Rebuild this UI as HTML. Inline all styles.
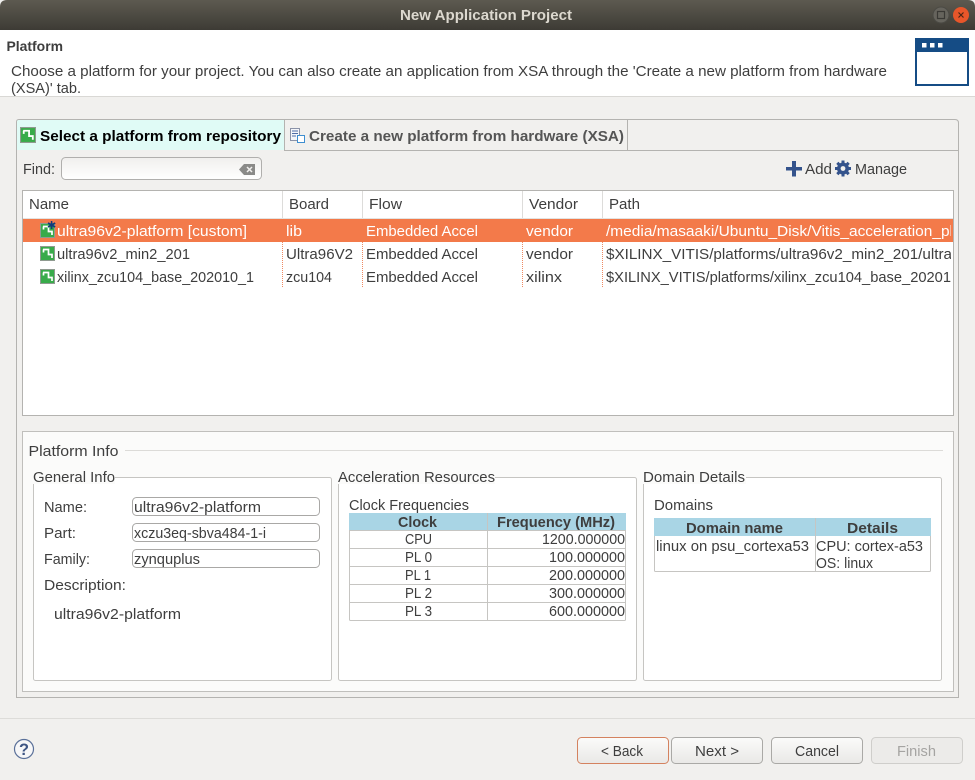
<!DOCTYPE html>
<html><head><meta charset="utf-8"><title>New Application Project</title>
<style>
html,body{margin:0;padding:0;background:#f1f0ee;overflow:hidden}
svg{display:block}
text{font-family:"Liberation Sans",sans-serif;font-size:14.7px;fill:#3e3e3e}
.b{font-weight:bold}
.w{fill:#fff}
</style></head><body>
<svg width="975" height="780" viewBox="0 0 975 780" xmlns="http://www.w3.org/2000/svg">
<defs>
<linearGradient id="tb" x1="0" y1="0" x2="0" y2="1"><stop offset="0" stop-color="#5d5a50"/><stop offset="1" stop-color="#3d3b35"/></linearGradient>
<linearGradient id="btn" x1="0" y1="0" x2="0" y2="1"><stop offset="0" stop-color="#fbfbfa"/><stop offset="1" stop-color="#e9e8e6"/></linearGradient>
<linearGradient id="inp" x1="0" y1="0" x2="0" y2="1"><stop offset="0" stop-color="#f0efed"/><stop offset="1" stop-color="#fff"/></linearGradient>
<clipPath id="pc"><rect x="603" y="219" width="348" height="70"/></clipPath>
<symbol id="pf" viewBox="0 0 15 15"><rect x=".5" y=".5" width="14" height="14" fill="#38ab4a" stroke="#8f9a90"/><path d="M3 3.500H8.500V8.500H12V12M3.500 3.500V6.500" fill="none" stroke="#fff" stroke-width="1.700"/></symbol>
</defs>

<!-- title bar -->
<path d="M0 30V7Q0 0 7 0H968Q975 0 975 7V30Z" fill="url(#tb)"/>
<text class="b" x="400" y="20" textLength="172" lengthAdjust="spacingAndGlyphs" style="fill:#dcd8cf;font-size:15px">New Application Project</text>
<circle cx="941" cy="15" r="8" fill="#66645d" stroke="#4b4a44"/>
<rect x="937.500" y="11.500" width="7" height="7" fill="none" stroke="#3a3935" stroke-width="1.200"/>
<circle cx="961" cy="15" r="8" fill="#e8562a"/>
<path d="M958.500 12.500L963.500 17.500M963.500 12.500L958.500 17.500" stroke="#4a2515" stroke-width="1.200"/>

<!-- header -->
<rect x="0" y="30" width="975" height="66" fill="#fff"/>
<rect x="0" y="96" width="975" height="1" fill="#d9d8d5"/>
<text class="b" x="6.500" y="51" textLength="56.500" lengthAdjust="spacingAndGlyphs" style="font-size:13.800px">Platform</text>
<text x="11" y="76" textLength="876" lengthAdjust="spacingAndGlyphs">Choose a platform for your project. You can also create an application from XSA through the 'Create a new platform from hardware</text>
<text x="11" y="93" textLength="70" lengthAdjust="spacingAndGlyphs">(XSA)' tab.</text>
<rect x="915" y="38" width="54" height="48" fill="#154c85"/>
<rect x="917" y="52" width="50" height="32" fill="#fff"/>
<rect x="922" y="43" width="4.500" height="4.500" fill="#fff"/><rect x="930" y="43" width="4.500" height="4.500" fill="#fff"/><rect x="938" y="43" width="4.500" height="4.500" fill="#fff"/>

<!-- tab folder -->
<path fill="none" stroke="#b4b3b0" d="M16.500 697.500V122Q16.500 119.500 19 119.500H955Q958.500 119.500 958.500 123V697.500Z"/>
<path d="M17 150V122Q17 120 19 120H284V150Z" fill="#e0fbf6"/>
<path fill="none" stroke="#b4b3b0" d="M284.500 120V150.500H958M627.500 120V150.500"/>
<use href="#pf" x="20" y="127" width="16" height="16"/>
<text class="b" x="40" y="141" textLength="241" lengthAdjust="spacingAndGlyphs" style="fill:#000;font-size:15px">Select a platform from repository</text>
<rect x="290.500" y="128.500" width="9" height="12" fill="#f4f6fa" stroke="#8b93a8"/>
<path d="M292 131h6M292 133.500h6M292 136h4" stroke="#4f6ea8"/>
<rect x="297.500" y="135.500" width="7" height="7" fill="#fff" stroke="#3e8ed0"/>
<text class="b" x="309" y="141" textLength="315" lengthAdjust="spacingAndGlyphs" style="fill:#555;font-size:15px">Create a new platform from hardware (XSA)</text>

<!-- find row -->
<text x="23" y="174" textLength="32" lengthAdjust="spacingAndGlyphs">Find:</text>
<rect x="61.500" y="157.500" width="200" height="22" rx="4" fill="url(#inp)" stroke="#b0afad"/>
<path d="M239 169.500L244 164H255V175H244Z" fill="#8a8a88"/>
<path d="M247 167L252 172M252 167L247 172" stroke="#f1f0ee" stroke-width="1.500"/>
<path d="M792 161h4v6h6v3.500h-6v6h-4v-6h-6v-3.500h6z" fill="#34538c"/>
<text x="805" y="174" textLength="27" lengthAdjust="spacingAndGlyphs">Add</text>
<circle cx="843" cy="168.500" r="6" fill="#34538c"/>
<path d="M843 160.500v16M835 168.500h16M837.300 162.800l11.400 11.400M848.700 162.800l-11.400 11.400" stroke="#34538c" stroke-width="3"/>
<circle cx="843" cy="168.500" r="2.400" fill="#f1f0ee"/>
<text x="855" y="174" textLength="52" lengthAdjust="spacingAndGlyphs">Manage</text>

<!-- table -->
<rect x="22.500" y="190.500" width="931" height="225" fill="#fff" stroke="#b4b3b0"/>
<path d="M282.500 191V219M362.500 191V219M522.500 191V219M602.500 191V219" stroke="#dddcda"/>
<rect x="23" y="218" width="930" height="1" fill="#e4e3e1"/>
<text x="29" y="209" textLength="40" lengthAdjust="spacingAndGlyphs">Name</text>
<text x="289" y="209" textLength="40" lengthAdjust="spacingAndGlyphs">Board</text>
<text x="369" y="209" textLength="33" lengthAdjust="spacingAndGlyphs">Flow</text>
<text x="529" y="209" textLength="49" lengthAdjust="spacingAndGlyphs">Vendor</text>
<text x="609" y="209" textLength="31" lengthAdjust="spacingAndGlyphs">Path</text>
<rect x="23" y="219" width="930" height="23" fill="#f37a4a"/>
<path d="M282.500 242V288M362.500 242V288M522.500 242V288M602.500 242V288" stroke="#ee8a63" stroke-dasharray="1 1"/>
<use href="#pf" x="40" y="223" width="15" height="15"/>
<path d="M51.600 221v8M48 223l7.200 4M55.200 223l-7.200 4" stroke="#143b7a" stroke-width="1.600"/>
<use href="#pf" x="40" y="246" width="15" height="15"/>
<use href="#pf" x="40" y="269" width="15" height="15"/>
<text class="w" x="57" y="236" textLength="190" lengthAdjust="spacingAndGlyphs">ultra96v2-platform [custom]</text>
<text class="w" x="286" y="236" textLength="16" lengthAdjust="spacingAndGlyphs">lib</text>
<text class="w" x="366" y="236" textLength="112" lengthAdjust="spacingAndGlyphs">Embedded Accel</text>
<text class="w" x="526" y="236" textLength="47" lengthAdjust="spacingAndGlyphs">vendor</text>
<g clip-path="url(#pc)">
<text class="w" x="606" y="236" textLength="347" lengthAdjust="spacingAndGlyphs">/media/masaaki/Ubuntu_Disk/Vitis_acceleration_pl</text>
<text x="606" y="259" textLength="346" lengthAdjust="spacingAndGlyphs">$XILINX_VITIS/platforms/ultra96v2_min2_201/ultra</text>
<text x="606" y="282" textLength="345" lengthAdjust="spacingAndGlyphs">$XILINX_VITIS/platforms/xilinx_zcu104_base_20201</text>
</g>
<text x="57" y="259" textLength="133" lengthAdjust="spacingAndGlyphs">ultra96v2_min2_201</text>
<text x="286" y="259" textLength="67" lengthAdjust="spacingAndGlyphs">Ultra96V2</text>
<text x="366" y="259" textLength="112" lengthAdjust="spacingAndGlyphs">Embedded Accel</text>
<text x="526" y="259" textLength="47" lengthAdjust="spacingAndGlyphs">vendor</text>
<text x="57" y="282" textLength="197" lengthAdjust="spacingAndGlyphs">xilinx_zcu104_base_202010_1</text>
<text x="286" y="282" textLength="46" lengthAdjust="spacingAndGlyphs">zcu104</text>
<text x="366" y="282" textLength="112" lengthAdjust="spacingAndGlyphs">Embedded Accel</text>
<text x="526" y="282" textLength="36" lengthAdjust="spacingAndGlyphs">xilinx</text>

<!-- platform info -->
<rect x="22.500" y="431.500" width="931" height="260" fill="#fbfbfa" stroke="#c0bfbc"/>
<text x="28.500" y="456" textLength="90" lengthAdjust="spacingAndGlyphs">Platform Info</text>
<rect x="125" y="450" width="818" height="1" fill="#dcdbd8"/>

<!-- general -->
<rect x="33.500" y="477.500" width="298" height="203" rx="2" fill="#fff" stroke="#c6c5c2"/>
<rect x="32" y="470" width="83" height="14" fill="#fbfbfa"/>
<text x="33" y="482" textLength="82" lengthAdjust="spacingAndGlyphs">General Info</text>
<text x="44" y="512" textLength="43" lengthAdjust="spacingAndGlyphs">Name:</text>
<text x="44" y="538" textLength="32" lengthAdjust="spacingAndGlyphs">Part:</text>
<text x="44" y="564" textLength="46" lengthAdjust="spacingAndGlyphs">Family:</text>
<text x="44" y="590" textLength="82" lengthAdjust="spacingAndGlyphs">Description:</text>
<text x="54" y="619" textLength="127" lengthAdjust="spacingAndGlyphs">ultra96v2-platform</text>
<rect x="132.500" y="497.500" width="187" height="18" rx="4" fill="#fff" stroke="#a9a8a6"/>
<rect x="132.500" y="523.500" width="187" height="18" rx="4" fill="#fff" stroke="#a9a8a6"/>
<rect x="132.500" y="549.500" width="187" height="18" rx="4" fill="#fff" stroke="#a9a8a6"/>
<text x="134" y="512" textLength="127" lengthAdjust="spacingAndGlyphs">ultra96v2-platform</text>
<text x="134" y="538" textLength="132" lengthAdjust="spacingAndGlyphs">xczu3eq-sbva484-1-i</text>
<text x="134" y="564" textLength="66" lengthAdjust="spacingAndGlyphs">zynquplus</text>

<!-- acceleration -->
<rect x="338.500" y="477.500" width="298" height="203" rx="2" fill="#fff" stroke="#c6c5c2"/>
<rect x="337" y="470" width="158" height="14" fill="#fbfbfa"/>
<text x="338" y="482" textLength="157" lengthAdjust="spacingAndGlyphs">Acceleration Resources</text>
<text x="349" y="510" textLength="120" lengthAdjust="spacingAndGlyphs">Clock Frequencies</text>
<rect x="349.500" y="513.500" width="276" height="107" rx="1" fill="#fff" stroke="#c6c5c2"/>
<rect x="349" y="513" width="277" height="17" fill="#a9d5e5"/>
<path d="M487.500 513V621" stroke="#c6c5c2"/>
<path d="M349 530.500H626M349 548.500H626M349 566.500H626M349 584.500H626M349 602.500H626" stroke="#c6c5c2"/>
<text class="b" x="398" y="527" textLength="39" lengthAdjust="spacingAndGlyphs">Clock</text>
<text class="b" x="497" y="527" textLength="118" lengthAdjust="spacingAndGlyphs">Frequency (MHz)</text>
<text x="405" y="544" textLength="27" lengthAdjust="spacingAndGlyphs">CPU</text>
<text x="405" y="562" textLength="27" lengthAdjust="spacingAndGlyphs">PL 0</text>
<text x="405" y="580" textLength="26" lengthAdjust="spacingAndGlyphs">PL 1</text>
<text x="405" y="598" textLength="27" lengthAdjust="spacingAndGlyphs">PL 2</text>
<text x="405" y="616" textLength="27" lengthAdjust="spacingAndGlyphs">PL 3</text>
<text x="542" y="544" textLength="83" lengthAdjust="spacingAndGlyphs">1200.000000</text>
<text x="549" y="562" textLength="76" lengthAdjust="spacingAndGlyphs">100.000000</text>
<text x="549" y="580" textLength="76" lengthAdjust="spacingAndGlyphs">200.000000</text>
<text x="549" y="598" textLength="76" lengthAdjust="spacingAndGlyphs">300.000000</text>
<text x="549" y="616" textLength="76" lengthAdjust="spacingAndGlyphs">600.000000</text>

<!-- domains -->
<rect x="643.500" y="477.500" width="298" height="203" rx="2" fill="#fff" stroke="#c6c5c2"/>
<rect x="642" y="470" width="104" height="14" fill="#fbfbfa"/>
<text x="643" y="482" textLength="102" lengthAdjust="spacingAndGlyphs">Domain Details</text>
<text x="654" y="510" textLength="59" lengthAdjust="spacingAndGlyphs">Domains</text>
<rect x="654.500" y="518.500" width="276" height="53" rx="1" fill="#fff" stroke="#c6c5c2"/>
<rect x="654" y="518" width="277" height="18" fill="#a9d5e5"/>
<path d="M815.500 518V572" stroke="#c6c5c2"/>
<text class="b" x="686" y="533" textLength="97" lengthAdjust="spacingAndGlyphs">Domain name</text>
<text class="b" x="847" y="533" textLength="51" lengthAdjust="spacingAndGlyphs">Details</text>
<text x="656" y="551" textLength="153" lengthAdjust="spacingAndGlyphs">linux on psu_cortexa53</text>
<text x="816" y="551" textLength="107" lengthAdjust="spacingAndGlyphs">CPU: cortex-a53</text>
<text x="816" y="568" textLength="57" lengthAdjust="spacingAndGlyphs">OS: linux</text>

<!-- footer -->
<rect x="0" y="718" width="975" height="1" fill="#dddcd9"/>
<circle cx="24" cy="749" r="9.500" fill="#f7f7f8" stroke="#5a7099" stroke-width="1.200"/>
<text class="b" x="19" y="755" textLength="10" lengthAdjust="spacingAndGlyphs" style="font-size:17px;fill:#3f5684">?</text>

<rect x="577.500" y="737.500" width="91" height="26" rx="4" fill="url(#btn)" stroke="#d4825f"/>
<rect x="671.500" y="737.500" width="91" height="26" rx="4" fill="url(#btn)" stroke="#aaa9a6"/>
<rect x="771.500" y="737.500" width="91" height="26" rx="4" fill="url(#btn)" stroke="#aaa9a6"/>
<rect x="871.500" y="737.500" width="91" height="26" rx="4" fill="#ecebe9" stroke="#cfcecb"/>
<text x="601" y="756" textLength="42" lengthAdjust="spacingAndGlyphs">&lt; Back</text>
<text x="695" y="756" textLength="44" lengthAdjust="spacingAndGlyphs">Next &gt;</text>
<text x="795" y="756" textLength="44" lengthAdjust="spacingAndGlyphs">Cancel</text>
<text x="897" y="756" textLength="39" lengthAdjust="spacingAndGlyphs" style="fill:#a5a4a2">Finish</text>
</svg>
</body></html>
